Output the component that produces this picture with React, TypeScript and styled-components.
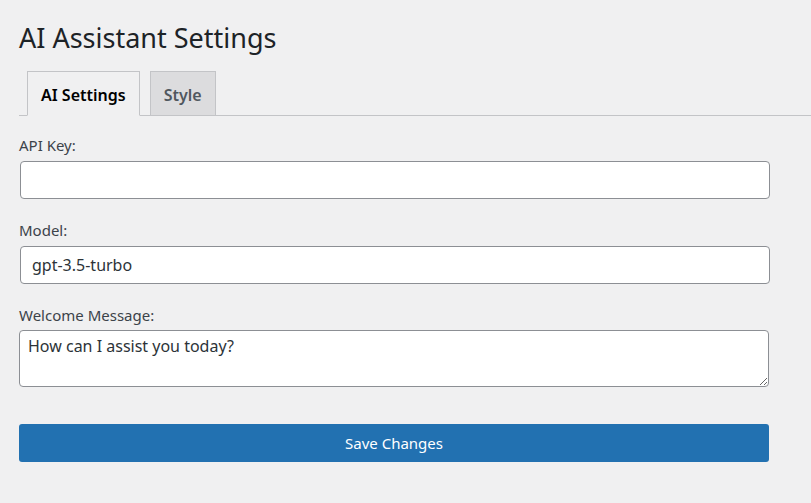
import { FC } from 'react';
import styled, { createGlobalStyle } from 'styled-components';

const GlobalStyle = createGlobalStyle`
  html, body {
    margin: 0;
    padding: 0;
    background: #f0f0f1;
  }
  body {
    font-family: "Noto Sans", "Open Sans", sans-serif;
    color: #1d2327;
  }
`;

const Wrap = styled.div`
  padding: 19px 0 0 19px;
`;

const Title = styled.h1`
  margin: 0 0 14px;
  font-size: 27px;
  font-weight: 400;
  line-height: 38px;
  color: #1d2327;
`;

const TabBar = styled.nav`
  display: flex;
  gap: 10px;
  padding-left: 8px;
  border-bottom: 1px solid #c3c4c7;
`;

const Tab = styled.button<{ $active?: boolean }>`
  font-family: inherit;
  font-size: 16px;
  font-weight: 600;
  line-height: 24px;
  padding: 11px 13px 8px;
  margin-bottom: -1px;
  border: 1px solid #c3c4c7;
  border-bottom-color: ${(p) => (p.$active ? '#f0f0f1' : '#c3c4c7')};
  background: ${(p) => (p.$active ? '#f0f0f1' : '#dcdcde')};
  color: ${(p) => (p.$active ? '#000' : '#50575e')};
  cursor: pointer;
`;

const Form = styled.form`
  padding: 19px 42px 0 0;
  display: flex;
  flex-direction: column;
`;

const Field = styled.div`
  display: flex;
  flex-direction: column;
  margin-bottom: 21px;
`;

const Label = styled.label`
  font-size: 15px;
  line-height: 20px;
  color: #3c434a;
  margin-bottom: 6px;
`;

const Input = styled.input`
  box-sizing: border-box;
  margin-left: 1px;
  margin-right: -1px;
  height: 38px;
  padding: 0 11px;
  font-family: inherit;
  font-size: 16px;
  color: #2c3338;
  background: #fff;
  border: 1px solid #8c8f94;
  border-radius: 4px;
  outline: none;
`;

const TextArea = styled.textarea`
  box-sizing: border-box;
  height: 57px;
  margin-top: -1px;
  padding: 4px 8px;
  font-family: inherit;
  font-size: 16px;
  line-height: 22px;
  color: #2c3338;
  background: #fff;
  border: 1px solid #8c8f94;
  border-radius: 4px;
  outline: none;
  resize: vertical;
`;

const SaveButton = styled.button`
  margin-top: 16px;
  height: 38px;
  font-family: inherit;
  font-size: 15px;
  color: #fff;
  background: #2271b1;
  border: none;
  border-radius: 3px;
  cursor: pointer;
`;

const App: FC = () => {
  return (
    <>
      <GlobalStyle />
      <Wrap>
        <Title>AI Assistant Settings</Title>
        <TabBar>
          <Tab $active type="button">AI Settings</Tab>
          <Tab type="button">Style</Tab>
        </TabBar>
        <Form onSubmit={(e) => e.preventDefault()}>
          <Field>
            <Label htmlFor="api-key">API Key:</Label>
            <Input id="api-key" type="text" defaultValue="" />
          </Field>
          <Field>
            <Label htmlFor="model">Model:</Label>
            <Input id="model" type="text" defaultValue="gpt-3.5-turbo" />
          </Field>
          <Field>
            <Label htmlFor="welcome">Welcome Message:</Label>
            <TextArea id="welcome" defaultValue="How can I assist you today?" />
          </Field>
          <SaveButton type="submit">Save Changes</SaveButton>
        </Form>
      </Wrap>
    </>
  );
};

export default App;
